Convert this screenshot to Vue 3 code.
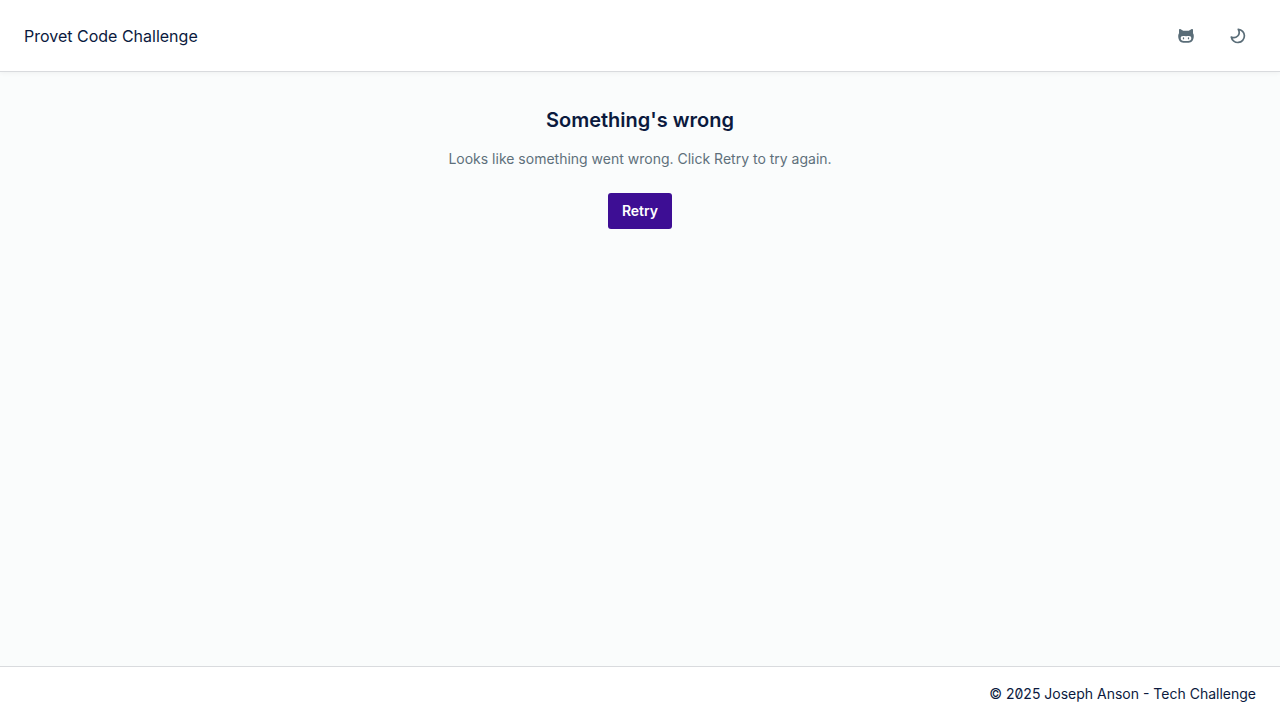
<script setup>
const retry = () => window.location.reload()
</script>

<template>
  <div class="layout">
    <header class="header">
      <span class="title">Provet Code Challenge</span>
      <nav class="actions">
        <a class="icon-button" href="#" aria-label="GitHub">
          <svg viewBox="0 0 16 16" width="16" height="16" fill="currentColor" aria-hidden="true">
            <path fill-rule="evenodd" d="M1 1.700C1 1 1.600.7 2.300 1l2.900 1.700h5.600L13.700 1c.7-.3 1.300 0 1.300.7v3.600c.6.8.8 1.700.8 2.800 0 4.300-2.200 6.700-5.200 6.700H5.400C2.400 14.800.2 12.400.2 8.100c0-1.100.3-2 .8-2.800zM5 8.100c-1.500 0-2.300.8-2.300 2.100C2.700 12.200 4 12.900 6 12.900h4c2 0 3.300-.7 3.300-2.700 0-1.300-.8-2.100-2.300-2.100-1 0-2 .1-3 .1s-2-.1-3-.1z" />
            <ellipse cx="5.500" cy="10.300" rx=".7" ry="1.100" />
            <ellipse cx="10.500" cy="10.300" rx=".7" ry="1.100" />
          </svg>
        </a>
        <button class="icon-button" type="button" aria-label="Toggle dark mode">
          <svg viewBox="0 0 16 16" width="16" height="16" fill="none" stroke="currentColor" stroke-width="1.700" stroke-linejoin="round" aria-hidden="true">
            <path d="M8.300 1.300A6.600 6.600 0 1 1 1.300 9C3.300 10 6 9.700 7.700 8S9.500 3.500 8.300 1.300z" />
          </svg>
        </button>
      </nav>
    </header>
    <main class="content">
      <h1>Something's wrong</h1>
      <p>Looks like something went wrong. Click Retry to try again.</p>
      <button class="retry" type="button" @click="retry">Retry</button>
    </main>
    <footer class="footer">© 2025 Joseph Anson - Tech Challenge</footer>
  </div>
</template>

<style>
body { margin: 0; }
</style>

<style scoped>
.layout {
  display: flex;
  flex-direction: column;
  min-height: 100vh;
  background: #fafcfc;
  color: #0b1a3e;
  font-family: Inter, "Liberation Sans", sans-serif;
  font-size: 14px;
  line-height: 20px;
  font-feature-settings: "zero";
}
.header {
  display: flex;
  align-items: center;
  justify-content: space-between;
  padding: 18px 24px 17px;
  background: #fff;
  border-bottom: 1px solid #d9dbde;
  box-shadow: 0 1px 5px rgba(12, 12, 12, 0.05);
}
.title { font-size: 16px; }
.actions { display: flex; gap: 16px; }
.icon-button {
  display: flex;
  align-items: center;
  justify-content: center;
  width: 36px;
  height: 36px;
  padding: 0;
  border: 0;
  background: none;
  color: #5a6d78;
  cursor: pointer;
}
.content {
  display: flex;
  flex: 1;
  flex-direction: column;
  align-items: center;
  padding: 36px 24px;
}
h1 {
  margin: 0 0 17px;
  font-size: 20px;
  line-height: 24px;
  font-weight: 600;
}
p { margin: 0 0 24px; color: #5e707b; }
.retry {
  padding: 8px 14px;
  border: 0;
  border-radius: 3px;
  background: #3d0e94;
  color: #fff;
  font: inherit;
  font-weight: 600;
  cursor: pointer;
}
.footer {
  padding: 17px 24px 16px;
  border-top: 1px solid #d9dbde;
  background: #fff;
  text-align: right;
}
</style>
